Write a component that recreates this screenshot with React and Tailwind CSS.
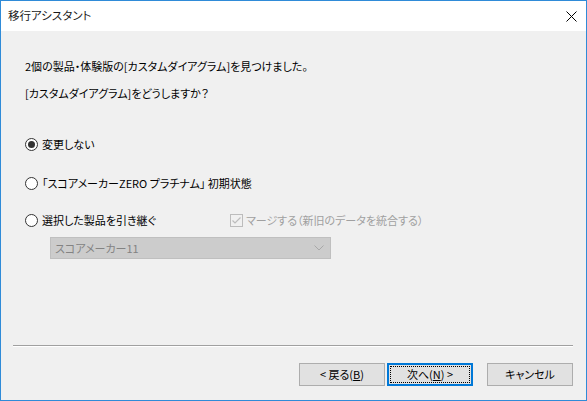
import React from 'react';

const font = "font-['Noto_Sans_CJK_JP','Noto_Sans',sans-serif] [font-feature-settings:'palt']";

const Radio = ({ checked }) => (
  <span className="w-[13px] h-[13px] rounded-full border border-[#333333] bg-white flex items-center justify-center shrink-0">
    {checked && <span className="w-[7px] h-[7px] rounded-full bg-[#333333]" />}
  </span>
);

const Button = ({ children, primary }) => (
  <button
    className={
      primary
        ? 'w-[86px] h-[23px] bg-[#e1e1e1] border-2 border-[#0078d7] flex items-center justify-center p-[1px]'
        : 'w-[86px] h-[23px] bg-[#e1e1e1] border border-[#adadad] flex items-center justify-center'
    }
  >
    {primary ? (
      <span className="w-full h-full border border-dotted border-black flex items-center justify-center">
        {children}
      </span>
    ) : (
      children
    )}
  </button>
);

export default function App() {
  return (
    <div className={`w-[587px] h-[401px] border border-[#2f8bd8] flex flex-col text-[11px] text-black leading-none ${font}`}>
      {/* Title bar */}
      <div className="h-[30px] bg-white flex items-center justify-between pl-[7px] pr-[9px] shrink-0">
        <span className="text-[11.5px] text-[#1a1a1a]">移行アシスタント</span>
        <svg width="11" height="11" viewBox="0 0 11 11" className="mt-[1px]">
          <path d="M0.5 0.5L10.5 10.5M10.5 0.5L0.5 10.5" stroke="#000" strokeWidth="1" />
        </svg>
      </div>

      {/* Body */}
      <div className="flex-1 bg-[#f0f0f0] flex flex-col">
        <div className="pl-[24px] flex flex-col">
          <div className="h-[20px] mt-[25px] flex items-center">
            2個の製品・体験版の[カスタムダイアグラム]を見つけました。
          </div>
          <div className="h-[20px] mt-[7px] flex items-center">
            [カスタムダイアグラム]をどうしますか？
          </div>

          <div className="h-[20px] mt-[31px] flex items-center gap-[4px]">
            <Radio checked />
            <span>変更しない</span>
          </div>
          <div className="h-[20px] mt-[19px] flex items-center gap-[4px]">
            <Radio />
            <span>「スコアメーカーZERO プラチナム」 初期状態</span>
          </div>
          <div className="h-[20px] mt-[17px] flex items-center">
            <div className="w-[205px] flex items-center gap-[4px]">
              <Radio />
              <span>選択した製品を引き継ぐ</span>
            </div>
            <div className="flex items-center gap-[3px] text-[#a0a0a0]">
              <span className="w-[13px] h-[13px] border border-[#bcbcbc] bg-[#f0f0f0] flex items-center justify-center">
                <svg width="11" height="11" viewBox="0 0 11 11">
                  <path d="M1.5 5.5L4 8L9.5 2.5" fill="none" stroke="#bcbcbc" strokeWidth="1.2" />
                </svg>
              </span>
              <span>マージする（新旧のデータを統合する）</span>
            </div>
          </div>

          <div className="ml-[25px] mt-[7px] w-[281px] h-[22px] bg-[#cccccc] border border-[#bfbfbf] flex items-center justify-between pl-[4px] pr-[6px] text-[#838383]">
            <span>スコアメーカー11</span>
            <svg width="10" height="6" viewBox="0 0 10 6">
              <path d="M0.5 0.5L5 5L9.5 0.5" fill="none" stroke="#a8a8a8" strokeWidth="1" />
            </svg>
          </div>
        </div>

        {/* Separator */}
        <div className="mt-[86px] ml-[12px] mr-[13px] h-[2px] border-t border-[#a0a0a0] border-b border-b-white" />

        {/* Buttons */}
        <div className="mt-[16px] flex justify-end pr-[13px]">
          <Button>
            &lt; 戻る(<span className="underline">B</span>)
          </Button>
          <div className="ml-[2px]">
            <Button primary>
              次へ(<span className="underline">N</span>) &gt;
            </Button>
          </div>
          <div className="ml-[14px]">
            <Button>キャンセル</Button>
          </div>
        </div>
      </div>
    </div>
  );
}
